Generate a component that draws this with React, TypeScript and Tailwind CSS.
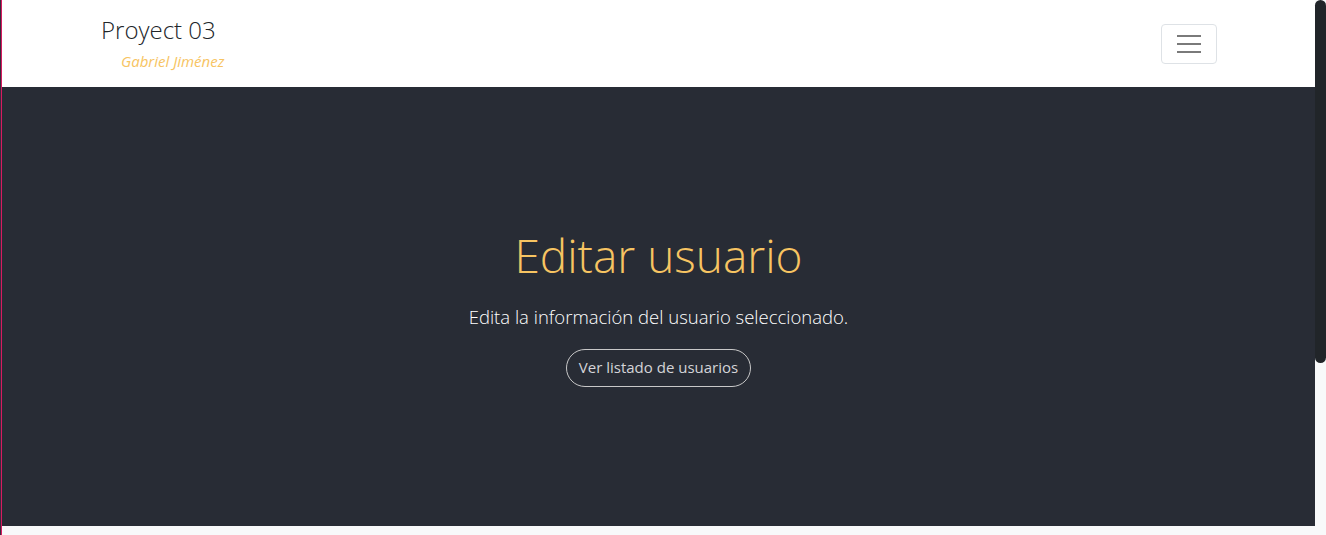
export default function App() {
  return (
    <div className="flex h-[535px] w-[1326px] overflow-hidden bg-[#f8f9fa] font-['Open_Sans',sans-serif]">
      <div className="w-px bg-[#3b2a3c]" />
      <div className="w-px bg-[#d81b60]" />
      <div className="flex flex-1 flex-col">
        <nav className="flex h-[87px] items-start justify-between bg-white pl-[99px] pr-[98px]">
          <div className="flex flex-col pt-[13px]">
            <span className="text-[24px] font-light leading-[34px] text-[#212529]">Proyect 03</span>
            <span className="mt-[4px] pl-[20px] text-[15px] italic leading-[20px] text-[#f7c462]">Gabriel Jiménez</span>
          </div>
          <button className="mt-[24px] flex h-[40px] w-[56px] flex-col items-center justify-center gap-[6px] rounded-[4px] border border-[#dee2e6]">
            <span className="h-[2px] w-[24px] bg-[#7a7a7a]" />
            <span className="h-[2px] w-[24px] bg-[#7a7a7a]" />
            <span className="h-[2px] w-[24px] bg-[#7a7a7a]" />
          </button>
        </nav>
        <section className="flex h-[439px] flex-col items-center justify-center bg-[#282c35]">
          <h1 className="text-[46px] font-light leading-[56px] text-[#f7c462]">Editar usuario</h1>
          <p className="mt-[21px] text-[18.5px] font-light leading-[26px] text-white">
            Edita la información del usuario seleccionado.
          </p>
          <button className="mt-[19px] h-[38px] rounded-full border border-[#c8c8c8] px-[12px] text-[15px] font-medium text-[#d4d4d8]">
            Ver listado de usuarios
          </button>
        </section>
      </div>
      <div className="flex w-[11px] flex-col bg-[#f8f9fa]">
        <div className="h-[363px] rounded-[6px] bg-[#212529]" />
      </div>
    </div>
  );
}
